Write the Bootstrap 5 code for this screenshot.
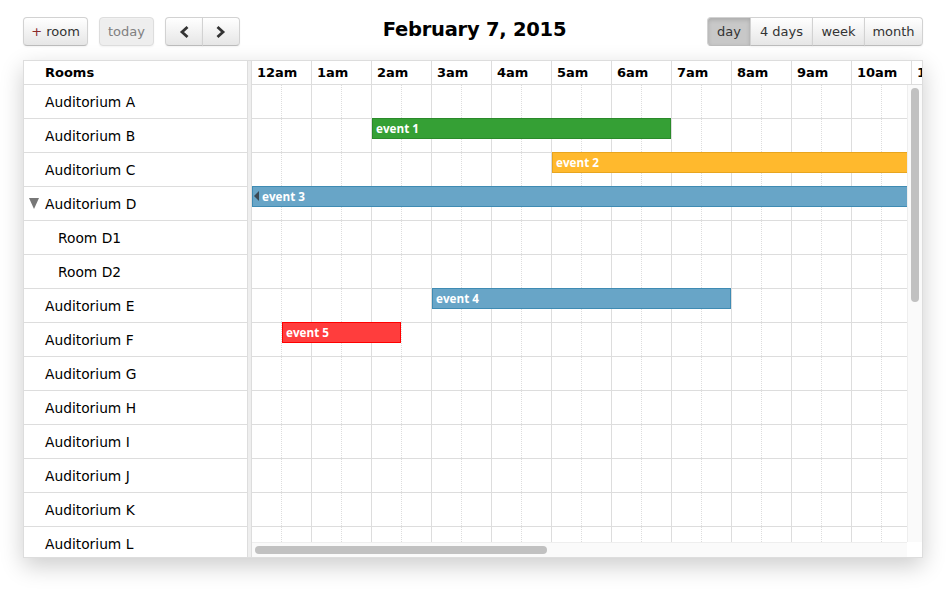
<!DOCTYPE html>
<html lang="en">
<head>
<meta charset="utf-8">
<title>Scheduler</title>
<link rel="stylesheet" href="https://cdn.jsdelivr.net/npm/bootstrap@5.3.0/dist/css/bootstrap.min.css">
<style>
html,body{height:100%;overflow:hidden;background:#fff;}
body{font-family:"DejaVu Sans","Liberation Sans",sans-serif;font-size:13.8px;color:#000;}
.page-wrap{padding:17px 23px 0 23px;}
.tool-bar{height:43px;align-items:flex-start;}
.tool-side{flex:1 1 0;gap:11px;}
.tool-title{font-size:19.5px;font-weight:700;line-height:26px;margin:0;padding-left:3px;letter-spacing:-.25px;}
.tb-btn.btn{font-size:13px;line-height:20px;height:29px;padding:3px 0;color:#333;border:1px solid #d2d2d2;border-bottom-color:#bbb;border-radius:4px;background:linear-gradient(#fff,#e6e6e6);box-shadow:inset 0 1px 0 rgba(255,255,255,.2),0 1px 2px rgba(0,0,0,.05);flex:none;}
.tb-btn.btn.off{color:#808080;background:#eee;opacity:1;border-color:#ddd;}
.tb-btn.btn.on{background:#c8c8c8;box-shadow:inset 0 2px 4px rgba(0,0,0,.15);color:#333;}
.tb-plus{color:#8a2b2b;}
.w-room{width:65px;}
.w-today{width:55px;}
.w-day{width:44px;}
.w-four{width:63px;}
.w-week{width:53px;}
.w-month{width:59px;}
.tb-btn.btn.tb-arrow{width:38px;}
.sched-box{position:relative;height:498px;border:1px solid #ddd;background:#fff;overflow:hidden;}
.sched-shadow{box-shadow:0 8px 22px rgba(0,0,0,.2);}
.room-col{width:223px;flex:none;}
.split-bar{width:5px;flex:none;background:#eee;border-left:1px solid #ddd;border-right:1px solid #ddd;}
.time-col{flex:1 1 0;min-width:0;position:relative;overflow:hidden;}
.room-head{height:24px;border-bottom:1px solid #ddd;font-weight:700;line-height:24px;padding-left:21px;font-size:13px;}
.room-row{height:34px;border-bottom:1px solid #ddd;line-height:34px;padding-left:21px;position:relative;white-space:nowrap;}
.room-row.sub{padding-left:34px;}
.tree-arrow{position:absolute;left:5px;top:11px;width:0;height:0;border-left:5px solid transparent;border-right:5px solid transparent;border-top:11px solid #777;}
.time-head{height:24px;border-bottom:1px solid #ddd;white-space:nowrap;}
.hour-lab{flex:none;width:60px;border-right:1px solid #ddd;font-weight:700;line-height:24px;padding-left:5px;font-size:13px;}
.time-body{position:relative;height:457px;width:655px;overflow:hidden;}
.hour-cols{height:100%;}
.hour-cell{flex:none;width:60px;height:100%;border-right:1px solid #ddd;}
.half-line{width:30px;height:100%;border-right:1px dotted #ddd;}
.row-layer{position:absolute;inset:0;}
.grid-row{position:relative;height:34px;border-bottom:1px solid #ddd;}
.sched-ev{position:absolute;top:-1px;height:21px;color:#fff;font-family:"Open Sans","DejaVu Sans",sans-serif;font-size:11.7px;font-weight:700;line-height:19px;padding-left:3px;border:1px solid;white-space:nowrap;overflow:hidden;}
.ev-green{background:#35a035;border-color:#2a8a2a;}
.ev-amber{background:#ffb92d;border-color:#e8a51f;}
.ev-blue{background:#68a5c7;border-color:#3f8bb3;}
.ev-red{background:#ff3d3d;border-color:#f00;}
.sched-ev.ev-cont{padding-left:9px;}
.ev-back{position:absolute;left:1px;top:4px;width:0;height:0;border-top:5px solid transparent;border-bottom:5px solid transparent;border-right:5px solid #3b4a55;}
.sb-v{position:absolute;right:0;top:24px;width:15px;height:457px;background:#fafafa;border-left:1px solid #eee;}
.sb-v-th{position:absolute;left:3px;top:3px;width:8px;height:214px;border-radius:4px;background:#c1c1c1;}
.sb-h{position:absolute;left:0;bottom:0;right:15px;height:15px;background:#fafafa;border-top:1px solid #eee;}
.sb-h-th{position:absolute;left:3px;top:3px;width:292px;height:8px;border-radius:4px;background:#c1c1c1;}
.sb-c{position:absolute;right:0;bottom:0;width:15px;height:15px;background:#fff;}
</style>
</head>
<body>
<div class="page-wrap">
  <div class="d-flex tool-bar">
    <div class="tool-side d-flex">
      <button type="button" class="btn tb-btn w-room"><span class="tb-plus">+</span> room</button>
      <button type="button" class="btn tb-btn off w-today">today</button>
      <div class="btn-group">
        <button type="button" class="btn tb-btn tb-arrow" aria-label="previous"><svg width="12" height="14" viewBox="0 0 12 14"><path d="M9.5 2 4 7l5.500 5" fill="none" stroke="#333" stroke-width="2.800"/></svg></button>
        <button type="button" class="btn tb-btn tb-arrow" aria-label="next"><svg width="12" height="14" viewBox="0 0 12 14"><path d="M2.500 2 8 7l-5.500 5" fill="none" stroke="#333" stroke-width="2.800"/></svg></button>
      </div>
    </div>
    <h1 class="tool-title">February 7, 2015</h1>
    <div class="tool-side d-flex justify-content-end">
      <div class="btn-group">
        <button type="button" class="btn tb-btn on w-day">day</button>
        <button type="button" class="btn tb-btn w-four">4 days</button>
        <button type="button" class="btn tb-btn w-week">week</button>
        <button type="button" class="btn tb-btn w-month">month</button>
      </div>
    </div>
  </div>
  <div class="sched-shadow">
  <div class="sched-box d-flex">
    <div class="room-col">
      <div class="room-head">Rooms</div>
      <div class="room-row">Auditorium A</div>
      <div class="room-row">Auditorium B</div>
      <div class="room-row">Auditorium C</div>
      <div class="room-row"><span class="tree-arrow"></span>Auditorium D</div>
      <div class="room-row sub">Room D1</div>
      <div class="room-row sub">Room D2</div>
      <div class="room-row">Auditorium E</div>
      <div class="room-row">Auditorium F</div>
      <div class="room-row">Auditorium G</div>
      <div class="room-row">Auditorium H</div>
      <div class="room-row">Auditorium I</div>
      <div class="room-row">Auditorium J</div>
      <div class="room-row">Auditorium K</div>
      <div class="room-row">Auditorium L</div>
    </div>
    <div class="split-bar"></div>
    <div class="time-col">
      <div class="time-head d-flex">
        <div class="hour-lab">12am</div><div class="hour-lab">1am</div><div class="hour-lab">2am</div><div class="hour-lab">3am</div><div class="hour-lab">4am</div><div class="hour-lab">5am</div><div class="hour-lab">6am</div><div class="hour-lab">7am</div><div class="hour-lab">8am</div><div class="hour-lab">9am</div><div class="hour-lab">10am</div><div class="hour-lab">11am</div>
      </div>
      <div class="time-body">
        <div class="hour-cols d-flex">
          <div class="hour-cell"><div class="half-line"></div></div><div class="hour-cell"><div class="half-line"></div></div><div class="hour-cell"><div class="half-line"></div></div><div class="hour-cell"><div class="half-line"></div></div><div class="hour-cell"><div class="half-line"></div></div><div class="hour-cell"><div class="half-line"></div></div><div class="hour-cell"><div class="half-line"></div></div><div class="hour-cell"><div class="half-line"></div></div><div class="hour-cell"><div class="half-line"></div></div><div class="hour-cell"><div class="half-line"></div></div><div class="hour-cell"><div class="half-line"></div></div><div class="hour-cell"><div class="half-line"></div></div>
        </div>
        <div class="row-layer">
          <div class="grid-row"></div>
          <div class="grid-row"><div class="sched-ev ev-green" style="left:120px;width:299px">event 1</div></div>
          <div class="grid-row"><div class="sched-ev ev-amber" style="left:300px;width:400px">event 2</div></div>
          <div class="grid-row"><div class="sched-ev ev-blue ev-cont" style="left:0;width:700px"><span class="ev-back"></span>event 3</div></div>
          <div class="grid-row"></div>
          <div class="grid-row"></div>
          <div class="grid-row"><div class="sched-ev ev-blue" style="left:180px;width:299px">event 4</div></div>
          <div class="grid-row"><div class="sched-ev ev-red" style="left:30px;width:119px">event 5</div></div>
          <div class="grid-row"></div>
          <div class="grid-row"></div>
          <div class="grid-row"></div>
          <div class="grid-row"></div>
          <div class="grid-row"></div>
          <div class="grid-row"></div>
        </div>
      </div>
      <div class="sb-v"><div class="sb-v-th"></div></div>
      <div class="sb-h"><div class="sb-h-th"></div></div>
      <div class="sb-c"></div>
    </div>
  </div>
  </div>
</div>
</body>
</html>
